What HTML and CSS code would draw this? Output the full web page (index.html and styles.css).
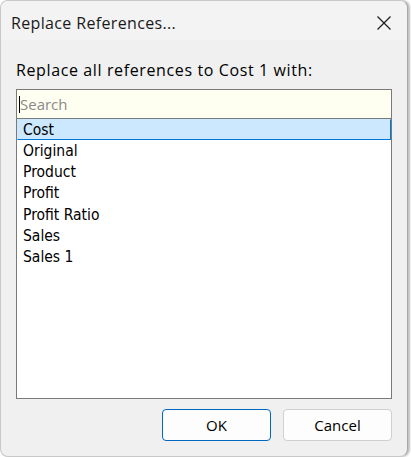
FILE: index.html
```html
<!DOCTYPE html>
<html>
<head>
<meta charset="utf-8">
<link rel="stylesheet" href="styles.css">
</head>
<body>
<div class="window">
  <div class="titlebar">
    <span class="title">Replace References...</span>
    <svg class="close" width="16" height="16" viewBox="0 0 16 16"><path d="M1.5 1.5 L14.5 14.5 M14.5 1.5 L1.5 14.5" stroke="#1a1a1a" stroke-width="1.2" fill="none"/></svg>
  </div>
  <div class="content">
    <div class="label">Replace all references to Cost 1 with:</div>
    <div class="listbox">
      <div class="search"><span class="caret"></span><span class="placeholder">Search</span></div>
      <ul class="items">
        <li class="item selected">Cost</li>
        <li class="item">Original</li>
        <li class="item">Product</li>
        <li class="item">Profit</li>
        <li class="item">Profit Ratio</li>
        <li class="item">Sales</li>
        <li class="item">Sales 1</li>
      </ul>
    </div>
    <div class="buttons">
      <button class="btn primary">OK</button>
      <button class="btn">Cancel</button>
    </div>
  </div>
</div>
</body>
</html>
```
FILE: styles.css
```css
html, body {
  margin: 0;
  padding: 0;
  background: #ffffff;
  width: 411px;
  height: 457px;
  overflow: hidden;
}
body {
  font-family: "Open Sans", "Noto Sans", sans-serif;
  color: #000;
}
.window {
  box-sizing: border-box;
  width: 408px;
  height: 457px;
  border: 1px solid #c8c8c8;
  border-right: 1px solid #a8a8a8;
  border-radius: 8px;
  background: #f0f0f0;
  overflow: hidden;
  display: flex;
  flex-direction: column;
  box-shadow: 2px 0 2px rgba(0, 0, 0, 0.25);
}
.titlebar {
  height: 39px;
  background: #f3f3f3;
  display: flex;
  align-items: center;
  justify-content: space-between;
  padding: 0 15px 0 10px;
  flex-shrink: 0;
}
.title {
  font-size: 16px;
  letter-spacing: 0.35px;
  color: #1a1a1a;
  padding-top: 4px;
}
.close {
  margin-top: 4px;
}
.content {
  padding: 21px 15px 0 15px;
  display: flex;
  flex-direction: column;
  flex: 1;
}
.label {
  font-size: 16px;
  letter-spacing: 0.62px;
  line-height: 19px;
  margin-bottom: 9px;
}
.listbox {
  box-sizing: border-box;
  height: 310px;
  border: 1px solid #7a7a7a;
  background: #fff;
  display: flex;
  flex-direction: column;
}
.search {
  box-sizing: border-box;
  height: 29px;
  background: #fefff0;
  border-bottom: 1px solid #7a7a7a;
  display: flex;
  align-items: center;
  padding-left: 2px;
  font-size: 15px;
}
.caret {
  width: 1px;
  height: 17px;
  background: #000;
}
.placeholder {
  color: #8a8a8a;
}
.items {
  list-style: none;
  margin: 0;
  padding: 0;
}
.item {
  box-sizing: border-box;
  height: 21.2px;
  line-height: 21px;
  font-family: "DejaVu Sans Condensed", "DejaVu Sans", sans-serif;
  font-stretch: condensed;
  font-size: 15.5px;
  padding-left: 5px;
  border: 1px solid transparent;
}
.item.selected {
  height: 21px;
  line-height: 20px;
  background: #cce8ff;
  border-color: #0078d7;
  border-left-color: #cce8ff;
  border-top-color: #cce8ff;
}
.buttons {
  display: flex;
  justify-content: flex-end;
  gap: 12px;
  margin-top: 10px;
}
.btn {
  box-sizing: border-box;
  width: 109px;
  height: 32px;
  border-radius: 4px;
  border: 1px solid #d0d0d0;
  background: #fdfdfd;
  font-family: "Open Sans", "Noto Sans", sans-serif;
  font-size: 15px;
  color: #000;
  padding: 0;
}
.btn.primary {
  border-color: #0067c0;
}
```
